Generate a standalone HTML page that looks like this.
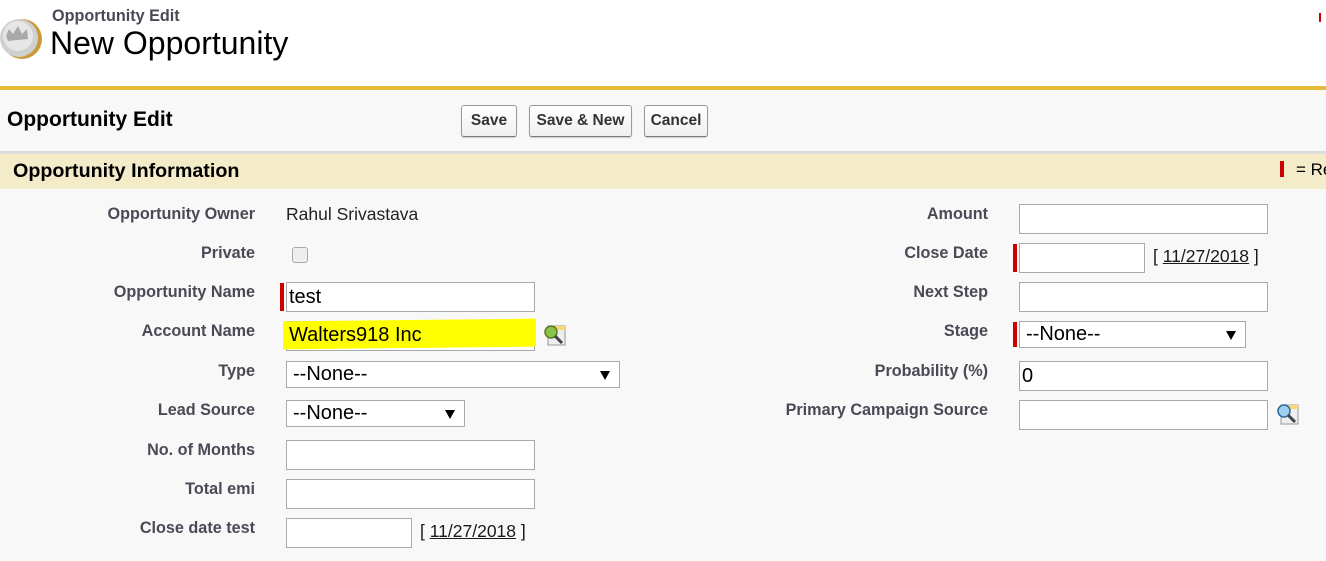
<!DOCTYPE html>
<html><head><style>
*{margin:0;padding:0;box-sizing:border-box}
body{width:1326px;height:561px;overflow:hidden;background:#f8f8f8;font-family:"Liberation Sans",Arial,sans-serif;position:relative}
.a{position:absolute;white-space:nowrap}
.hdr{left:0;top:0;width:1326px;height:86px;background:#fff}
.gold{left:0;top:86px;width:1326px;height:4px;background:#e3bc37}
.lbl{position:absolute;font-weight:bold;font-size:16.2px;color:#4a4a56;text-align:right;white-space:nowrap}
.l{right:1071px}
.r{right:338px}
.in{position:absolute;background:#fff;border:1px solid #a9a9a9;height:30px}
.req{position:absolute;width:4px;background:#c00}
.sel{position:absolute;background:#fff;border:1px solid #a9a9a9;height:27px;font-size:20px;padding-left:6px;line-height:25px;color:#000}
.sel:after{content:"";position:absolute;right:9px;top:9px;border-left:5px solid transparent;border-right:5px solid transparent;border-top:9px solid #000}
.btn{position:absolute;top:105px;height:32px;border:1px solid #9a9a9a;border-bottom-color:#7a7a7a;border-radius:3px;background:linear-gradient(#fff,#f0f0f0);font-weight:bold;font-size:15.5px;color:#333;text-align:center;line-height:30px;box-shadow:0 1px 1px #ccc}
.lk{position:absolute;font-size:17.5px;color:#1a1a1a;white-space:nowrap}
.ico{position:absolute;width:25px;height:24px}
</style></head><body>
<div class="a hdr"></div>
<div class="a gold"></div>
<svg class="a" style="left:0;top:14px" width="44" height="48" viewBox="0 0 44 48">
<ellipse cx="22" cy="25" rx="20" ry="20" fill="#c99a3a"/>
<ellipse cx="19" cy="24" rx="19" ry="19" fill="#d0d0d0"/>
<ellipse cx="18" cy="22" rx="15" ry="15" fill="#e6e6e6"/>
<path d="M6 22 L9 15 L13 20 L18 12 L22 20 L27 15 L28 25 L8 27 Z" fill="#a9a9a9"/>
</svg>
<div class="a" style="left:52px;top:7px;font-size:16.2px;font-weight:bold;color:#4a4a56">Opportunity Edit</div>
<div class="a" style="left:50px;top:25px;font-size:32px;color:#000">New Opportunity</div>
<div class="a" style="left:1319px;top:13px;width:2px;height:9px;background:#c00"></div>

<div class="a" style="left:7px;top:108px;font-size:21px;font-weight:bold;color:#000">Opportunity Edit</div>
<div class="btn" style="left:461px;width:56px">Save</div>
<div class="btn" style="left:529px;width:103px">Save &amp; New</div>
<div class="btn" style="left:644px;width:64px">Cancel</div>

<div class="a" style="left:0;top:151px;width:1326px;height:3px;background:#dcdcdc"></div>
<div class="a" style="left:0;top:154px;width:1326px;height:35px;background:#f4ebc9"></div>
<div class="a" style="left:13px;top:160px;font-size:19.7px;font-weight:bold;color:#000">Opportunity Information</div>
<div class="req" style="left:1280px;top:161px;height:16px"></div>
<div class="a" style="left:1296px;top:160px;font-size:17px;color:#000">= Re</div>

<div class="lbl l" style="top:205px">Opportunity Owner</div>
<div class="a" style="left:286px;top:204px;font-size:17.5px;color:#222">Rahul Srivastava</div>
<div class="lbl l" style="top:244px">Private</div>
<div class="a" style="left:292px;top:247px;width:16px;height:16px;border:1px solid #aaa;border-radius:3px;background:#eee"></div>
<div class="lbl l" style="top:283px">Opportunity Name</div>
<div class="req" style="left:280px;top:283px;height:28px"></div>
<div class="in" style="left:286px;top:282px;width:249px;font-size:20px;padding:2px 2px;line-height:24px">test</div>
<div class="lbl l" style="top:322px">Account Name</div>
<div class="in" style="left:286px;top:321px;width:249px"></div>
<div class="a" style="left:283px;top:320px;width:253px;height:28px;background:#ffff00;transform:skewY(-0.6deg)"></div>
<div class="a" style="left:289px;top:324px;font-size:20px;color:#000">Walters918 Inc</div>
<svg class="ico" style="left:542px;top:323px" viewBox="0 0 25 24"><rect x="6" y="3" width="17" height="19" fill="#eee" stroke="#999"/><rect x="14" y="3" width="9" height="4" fill="#fcd77a"/><circle cx="9" cy="9" r="6" fill="#8bc34a" stroke="#5a7a20" stroke-width="1.5"/><line x1="13" y1="13" x2="20" y2="20" stroke="#444" stroke-width="3"/></svg>
<div class="lbl l" style="top:362px">Type</div>
<div class="sel" style="left:286px;top:361px;width:334px">--None--</div>
<div class="lbl l" style="top:401px">Lead Source</div>
<div class="sel" style="left:286px;top:400px;width:179px">--None--</div>
<div class="lbl l" style="top:441px">No. of Months</div>
<div class="in" style="left:286px;top:440px;width:249px"></div>
<div class="lbl l" style="top:480px">Total emi</div>
<div class="in" style="left:286px;top:479px;width:249px"></div>
<div class="lbl l" style="top:519px">Close date test</div>
<div class="in" style="left:286px;top:518px;width:126px"></div>
<div class="lk" style="left:420px;top:521px">[ <u>11/27/2018</u> ]</div>

<div class="lbl r" style="top:205px">Amount</div>
<div class="in" style="left:1019px;top:204px;width:249px"></div>
<div class="lbl r" style="top:244px">Close Date</div>
<div class="req" style="left:1013px;top:244px;height:28px"></div>
<div class="in" style="left:1019px;top:243px;width:126px"></div>
<div class="lk" style="left:1153px;top:246px">[ <u>11/27/2018</u> ]</div>
<div class="lbl r" style="top:283px">Next Step</div>
<div class="in" style="left:1019px;top:282px;width:249px"></div>
<div class="lbl r" style="top:322px">Stage</div>
<div class="req" style="left:1013px;top:322px;height:25px"></div>
<div class="sel" style="left:1019px;top:321px;width:227px">--None--</div>
<div class="lbl r" style="top:362px">Probability (%)</div>
<div class="in" style="left:1019px;top:361px;width:249px;font-size:20px;padding:2px;line-height:24px">0</div>
<div class="lbl r" style="top:401px">Primary Campaign Source</div>
<div class="in" style="left:1019px;top:400px;width:249px"></div>
<svg class="ico" style="left:1275px;top:402px" viewBox="0 0 25 24"><rect x="6" y="3" width="17" height="19" fill="#eee" stroke="#999"/><rect x="14" y="3" width="9" height="4" fill="#fcd77a"/><circle cx="9" cy="9" r="6" fill="#9fd0f0" stroke="#2a6a9a" stroke-width="1.5"/><line x1="13" y1="13" x2="20" y2="20" stroke="#444" stroke-width="3"/></svg>
</body></html>
